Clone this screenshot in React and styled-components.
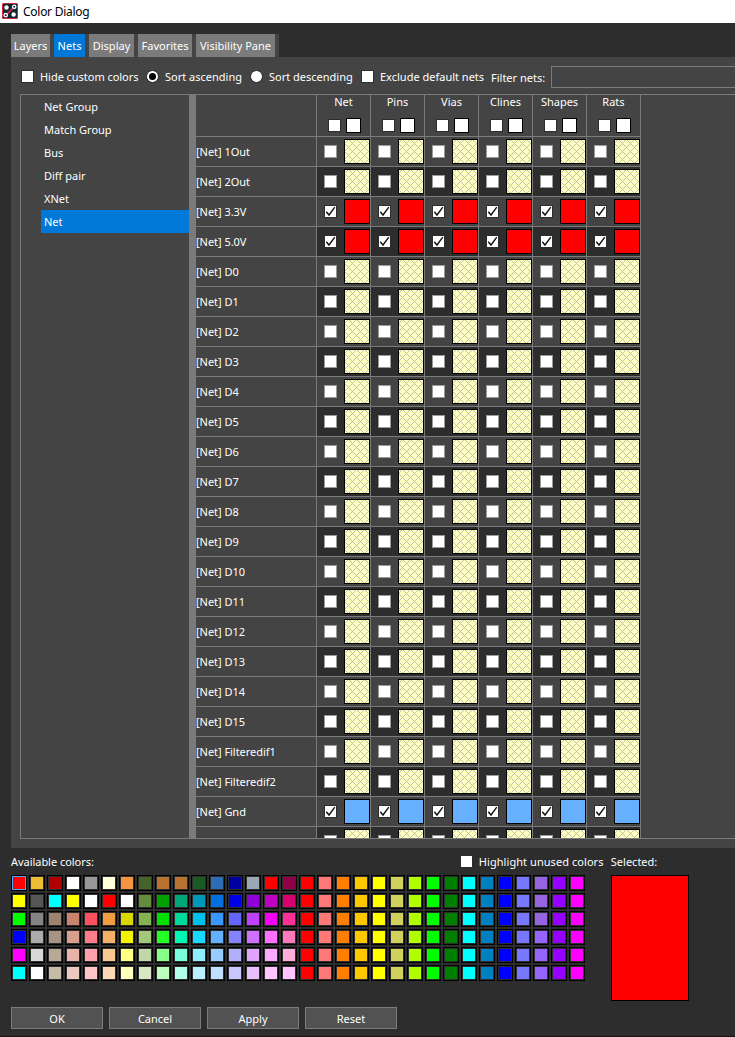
import React from "react";
import styled, { createGlobalStyle, css } from "styled-components";

const Global = createGlobalStyle`
  * { box-sizing: border-box; }
  body {
    margin: 0;
    background: #2d2d2d;
    color: #fff;
    font: 11px/15px "Noto Sans", "Open Sans", sans-serif;
    overflow: hidden;
  }
`;

const Window = styled.div`
  display: flex;
  flex-direction: column;
  width: 735px;
  height: 1037px;
  overflow: hidden;
  background: #2d2d2d;
  border-bottom: 1px solid #161616;
  white-space: nowrap;
`;

const Label = styled.span`
  display: inline-block;
  flex: none;
  letter-spacing: ${(p) => p.$ls || 0}px;
`;

const TitleBar = styled.header`
  display: flex;
  flex: none;
  align-items: center;
  gap: 5px;
  height: 23px;
  padding-left: 2px;
  background: #fff;
  color: #000;
  font-size: 12px;
  svg { display: block; margin-top: -1px; }
`;

const TabStrip = styled.nav`
  display: flex;
  flex: none;
  gap: 4px;
  width: 268px;
  height: 23px;
  margin: 11px 0 0 11px;
  background: #444;
`;

const Tab = styled.div`
  display: flex;
  align-items: center;
  justify-content: center;
  width: ${(p) => p.$w}px;
  padding-bottom: 1px;
  background: ${(p) => (p.$active ? "#0078d7" : "#7b7b7b")};
`;

const Panel = styled.main`
  display: flex;
  flex: none;
  flex-direction: column;
  height: 791px;
  margin-left: 11px;
  padding: 9px 0 9px 9px;
  background: #444;
`;

const Controls = styled.div`
  display: flex;
  flex: none;
  align-items: center;
  height: 22px;
`;

const Option = styled.label`
  display: flex;
  align-items: center;
  gap: 6px;
  width: ${(p) => p.$w}px;
  padding-bottom: ${(p) => p.$lift || 0}px;
`;

const Box = styled.span`
  display: block;
  flex: none;
  width: 13px;
  height: 13px;
  border: 1px solid ${(p) => (p.$light ? "#999" : "#2d2d2d")};
  background: #fff;
  svg { display: block; }
`;

const Radio = styled.span`
  display: flex;
  flex: none;
  align-items: center;
  justify-content: center;
  width: 13px;
  height: 13px;
  border: 1px solid #222;
  border-radius: 50%;
  background: #fff;
  &::after {
    content: "";
    width: 7px;
    height: 7px;
    border-radius: 50%;
    background: ${(p) => (p.$on ? "#000" : "#fff")};
  }
`;

const FilterInput = styled.div`
  flex: 1;
  height: 22px;
  margin-left: 6px;
  border: 1px solid #7b7b7b;
  border-right: 0;
`;

const Frame = styled.section`
  display: flex;
  flex: none;
  height: 745px;
  margin-top: 6px;
  border: 1px solid #7b7b7b;
  border-right: 0;
  overflow: hidden;
`;

const Tree = styled.div`
  flex: none;
  width: 168px;
  padding-left: 20px;
`;

const TreeItem = styled.div`
  height: 23px;
  padding: 4px 0 0 3px;
  background: ${(p) => (p.$active ? "#0078d7" : "transparent")};
`;

const Splitter = styled.div`
  flex: none;
  width: 7px;
  background: #7b7b7b;
`;

const Grid = styled.div`
  flex: none;
  width: 445px;
`;

const Row = styled.div`
  display: grid;
  grid-template-columns: 121px repeat(6, 54px);
  height: ${(p) => p.$h || 30}px;
`;

const line = css`
  border-right: 1px solid #7b7b7b;
  border-bottom: 1px solid #7b7b7b;
`;

const NameCell = styled.div`
  ${line}
  padding-top: 7px;
`;

const HeadCell = styled.div`
  ${line}
  display: flex;
  flex-direction: column;
  align-items: center;
  line-height: 13px;
`;

const HeadChecks = styled.div`
  display: flex;
  align-items: center;
  gap: 5px;
  margin-top: 10px;
  padding-left: 2px;
`;

const HeadSwatch = styled.span`
  width: 15px;
  height: 15px;
  border: 1px solid #000;
  background: #fff;
`;

const Cell = styled.div`
  ${line}
  display: flex;
  gap: 7px;
  align-items: flex-start;
  padding: 2px 0 0 7px;
  background: ${(p) => (p.$dark ? "#2d2d2d" : "#444")};
  ${Box} { margin-top: 6px; }
`;

const Swatch = styled.span`
  flex: none;
  width: 26px;
  height: 25px;
  border: 1px solid #000;
  background: ${(p) => p.$color};
  svg { display: block; }
`;

const Footer = styled.footer`
  flex: 1;
  padding: 6px 0 0 11px;
`;

const Captions = styled.div`
  display: flex;
  align-items: center;
  height: 15px;
`;

const Push = styled.span`
  width: ${(p) => p.$w}px;
  flex: none;
`;

const Colors = styled.div`
  display: flex;
  gap: 26px;
  height: 126px;
  margin-top: 6px;
`;

const Palette = styled.div`
  display: grid;
  grid-template-columns: repeat(32, 16px);
  grid-auto-rows: 16px;
  align-content: start;
  gap: 2px;
`;

const Chip = styled.span`
  border: 1px solid #000;
  padding: 1px;
  background: ${(p) => p.$color} content-box;
  box-shadow: inset 0 0 0 1px ${(p) => (p.$on ? "#4aa8ff" : "#2d2d2d")};
`;

const Selected = styled.div`
  width: 78px;
  border: 1px solid #000;
  background: #f00;
`;

const Buttons = styled.div`
  display: flex;
  gap: 6px;
  margin-top: 6px;
`;

const Button = styled.div`
  display: flex;
  align-items: center;
  justify-content: center;
  width: 92px;
  height: 22px;
  padding-top: 1px;
  border: 1px solid #7b7b7b;
  background: #525252;
`;

const Tick = () => (
  <svg width="11" height="11" viewBox="0 0 11 11">
    <path d="M1.3 5.8 4 9 9.8 1.2" fill="none" stroke="#111" strokeWidth="1.4" />
  </svg>
);

const Check = ({ on, light }) => <Box $light={light}>{on && <Tick />}</Box>;

const Hatch = () => (
  <svg width="24" height="23" shapeRendering="crispEdges">
    <rect width="24" height="23" fill="url(#hatch)" />
  </svg>
);

const HatchDefs = () => (
  <svg width="0" height="0" style={{ display: "block" }}>
    <pattern id="hatch" width="8" height="8" patternUnits="userSpaceOnUse">
      <rect width="8" height="8" fill="#ffffc0" />
      {Array.from({ length: 8 }, (_, i) => (
        <React.Fragment key={i}>
          <rect x={i} y={(i + 4) % 8} width="1" height="1" fill="#c0c0b8" />
          <rect x={i} y={(10 - i) % 8} width="1" height="1" fill="#c0c0b8" />
        </React.Fragment>
      ))}
    </pattern>
  </svg>
);

const Logo = () => (
  <svg width="16" height="16" viewBox="0 0 16 16">
    <rect width="16" height="16" rx="1.5" fill="#d4213d" />
    <path d="M1 1h14v14H1z" fill="#0c2733" />
    <path d="M4.5 11.5 11.5 4.5" stroke="#d4213d" strokeWidth="1.8" />
    <circle cx="4.5" cy="4.5" r="2.2" fill="#fff" />
    <circle cx="11.6" cy="11.5" r="2.2" fill="#fff" />
    <circle cx="12.2" cy="3.8" r="1.7" fill="#0c2733" stroke="#fff" strokeWidth="1.3" />
    <circle cx="3.7" cy="12.2" r="1.7" fill="#0c2733" stroke="#fff" strokeWidth="1.3" />
  </svg>
);

const tabs = [["Layers", 39], ["Nets", 31], ["Display", 45], ["Favorites", 54], ["Visibility Pane", 79]];
const groups = ["Net Group", "Match Group", "Bus", "Diff pair", "XNet", "Net"];
const columns = ["Net", "Pins", "Vias", "Clines", "Shapes", "Rats"];
const nets = ["1Out", "2Out", "3.3V", "5.0V", ...Array.from({ length: 16 }, (_, i) => "D" + i), "Filteredif1", "Filteredif2", "Gnd", ""];
const assigned = { "3.3V": "#f00", "5.0V": "#f00", Gnd: "#66b0ff" };

const tail = "#ff0000 #ff7878 #ff8000 #fcc800 #ffff00 #d0d05c #b0ff00 #00ff00 #008000 #00ffff #0080c0 #0000ff #7878ff".split(" ");
const palette = [
  "#ff0000 #ecbd35 #b00000 #ffffff #989898 #ffffd8 #f59542 #45632a #b87333 #b87333 #1b5a24 #2d6db5 #0000a0 #9aa7b5 #ff0000 #900048",
  "#ffff00 #555555 #00ffff #ffff00 #ffffff #ff0000 #ffffff #648c3c #00a000 #00a878 #0098b8 #0070e0 #0000e8 #9000d8 #c000c0 #d80070",
  "#00ff00 #848484 #9c8470 #c8846c #ff5060 #f09c40 #d8d800 #84b450 #00e000 #00d89c #00c0ec #3898ff #6464ff #c040ff #f400f4 #ff3098",
  "#0000ff #acacac #a89484 #d8a08c #ff7c88 #f4b068 #f4f400 #a0c878 #24ff24 #00f8b4 #18d8ff #64b0ff #8484ff #d070ff #ff70ff #ff78b8",
  "#ff00ff #d8d8d8 #b8a898 #e8b4a8 #ffa0ac #f8c890 #ffff88 #c0d8a8 #88ff88 #78ffdc #90ecff #98ccff #b0b0ff #e0a4ff #ffa8ff #ffacd8",
  "#00ffff #ffffff #c8bca8 #ecc8c0 #ffc4c8 #fcd8b4 #ffffbc #d8e8c4 #bcffbc #b0ffe8 #b8f0ff #c0e0ff #c8c8ff #e8c0ff #ffc4ff #ffc4ff",
].map((r, i) => [...r.split(" "), ...tail, i < 3 ? "#9664e0" : "#9664ff", "#9600ff", "#ff00ff"]);

export default function App() {
  return (
    <Window>
      <Global />
      <TitleBar><Logo /><Label $ls={-0.27}>Color Dialog</Label></TitleBar>
      <TabStrip>
        {tabs.map(([t, w]) => <Tab key={t} $w={w} $active={t === "Nets"}><Label>{t}</Label></Tab>)}
      </TabStrip>
      <Panel>
        <Controls>
          <Push $w={1} />
          <Option $lift={2} $w={125}><Check /><Label $ls={-0.04}>Hide custom colors</Label></Option>
          <Option $lift={2} $w={104}><Radio $on /><Label>Sort ascending</Label></Option>
          <Option $lift={2} $w={111}><Radio /><Label>Sort descending</Label></Option>
          <Option $lift={2} $w={130}><Check /><Label>Exclude default nets</Label></Option>
          <Label>Filter nets:</Label>
          <FilterInput />
        </Controls>
        <Frame>
          <Tree>
            {groups.map((g) => <TreeItem key={g} $active={g === "Net"}><Label>{g}</Label></TreeItem>)}
          </Tree>
          <Splitter />
          <Grid>
            <HatchDefs />
            <Row $h={42}>
              <NameCell />
              {columns.map((c) => (
                <HeadCell key={c}>
                  <Label>{c}</Label>
                  <HeadChecks><Check /><HeadSwatch /></HeadChecks>
                </HeadCell>
              ))}
            </Row>
            {nets.map((n, i) => (
              <Row key={i}>
                <NameCell>{n && <Label $ls={-0.04}>[Net] {n}</Label>}</NameCell>
                {columns.map((c) => (
                  <Cell key={c} $dark={i % 2 === 1}>
                    <Check on={!!assigned[n]} light={!assigned[n]} />
                    <Swatch $color={assigned[n] || "#ffffc0"}>{!assigned[n] && <Hatch />}</Swatch>
                  </Cell>
                ))}
              </Row>
            ))}
          </Grid>
        </Frame>
      </Panel>
      <Footer>
        <Captions>
          <Label $ls={-0.04}>Available colors:</Label>
          <Push $w={366} />
          <Option $w={151}><Check /><Label $ls={0.06}>Highlight unused colors</Label></Option>
          <Label>Selected:</Label>
        </Captions>
        <Colors>
          <Palette>
            {palette.flat().map((c, i) => <Chip key={i} $color={c} $on={i === 0} />)}
          </Palette>
          <Selected />
        </Colors>
        <Buttons>
          {["OK", "Cancel", "Apply", "Reset"].map((b) => <Button key={b}><Label>{b}</Label></Button>)}
        </Buttons>
      </Footer>
    </Window>
  );
}
